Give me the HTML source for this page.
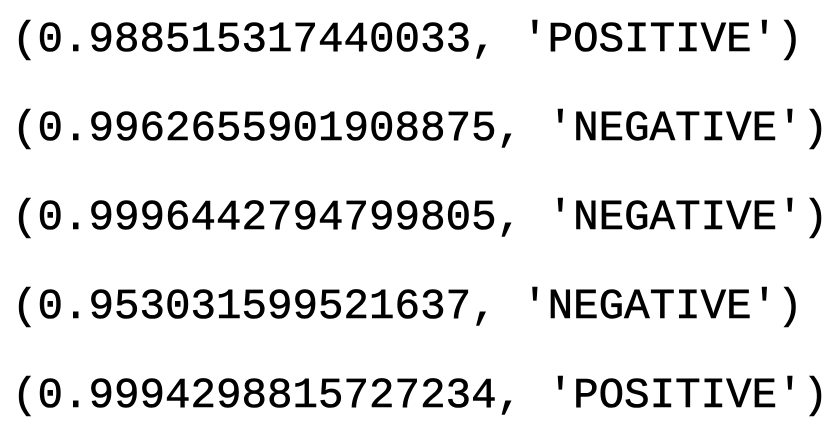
<!DOCTYPE html>
<html><head><style>
html,body{margin:0;padding:0;background:#fff;width:832px;height:440px;overflow:hidden}
.l{position:absolute;left:12px;font-family:"Liberation Mono",monospace;font-size:42.5px;line-height:42.5px;color:#000;white-space:pre;-webkit-text-stroke:0.6px #000}
</style></head><body>
<div class="l" style="top:19px">(0.988515317440033, 'POSITIVE')</div>
<div class="l" style="top:108px">(0.9962655901908875, 'NEGATIVE')</div>
<div class="l" style="top:197px">(0.9996442794799805, 'NEGATIVE')</div>
<div class="l" style="top:286px">(0.953031599521637, 'NEGATIVE')</div>
<div class="l" style="top:375px">(0.9994298815727234, 'POSITIVE')</div>
</body></html>
